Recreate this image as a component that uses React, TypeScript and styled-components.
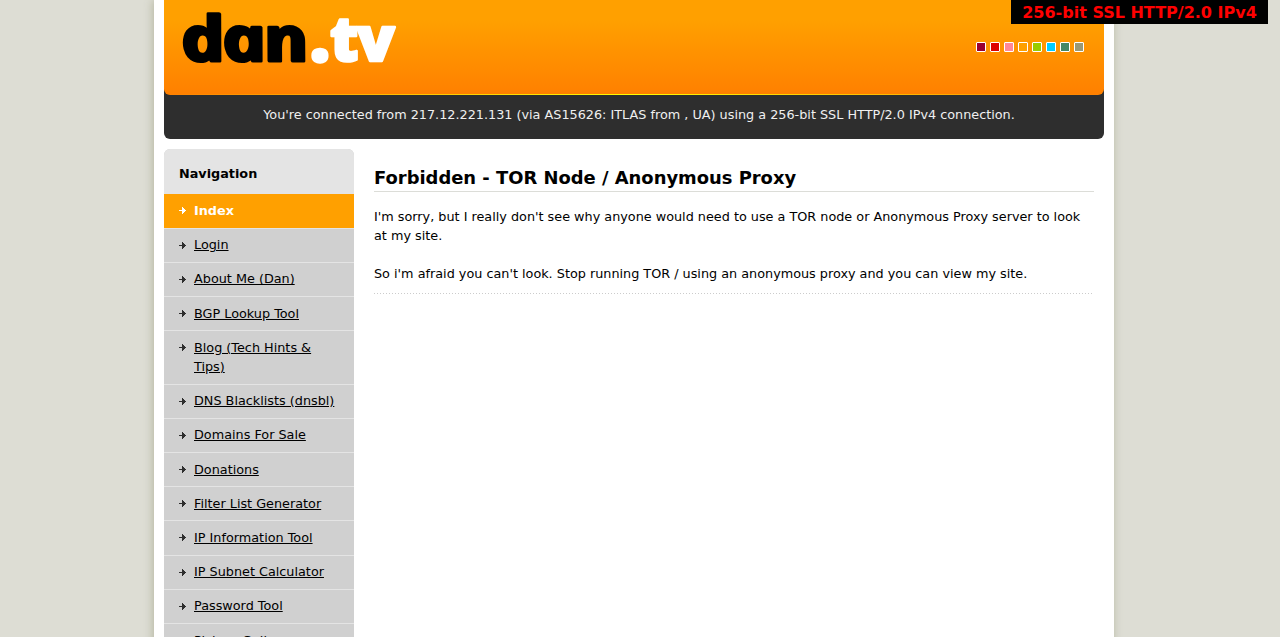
import React from "react";
import styled, { createGlobalStyle } from "styled-components";

const GlobalStyle = createGlobalStyle`
  html { overflow: hidden; height: 100%; }
  body {
    margin: 0;
    height: 100%;
    overflow: hidden;
    background: #ddddd4;
    color: #000;
    font: 12.8px/19.2px "DejaVu Sans", sans-serif;
  }
  #root { height: 100%; }
`;

const Backdrop = styled.div`
  position: relative;
  height: 100%;
  overflow: hidden;
`;

const Page = styled.div`
  width: 940px;
  min-height: 100%;
  margin-left: 154px;
  padding: 0 10px;
  background: #fff;
  box-shadow: -1px 0 9px #b4b59f;
`;

const Header = styled.header`
  background: #2e2e2e;
  border-radius: 0 0 6px 6px;
  height: 139px;
`;

const Banner = styled.div`
  display: flex;
  justify-content: space-between;
  align-items: flex-start;
  box-sizing: border-box;
  height: 95px;
  padding: 0 20px;
  border-radius: 0 0 6px 6px;
  background:
    linear-gradient(90deg, rgba(255, 255, 0, 0), #ffff00 50%, rgba(255, 255, 0, 0)) bottom / 100% 1px no-repeat,
    linear-gradient(#ffa000 0, #ffa000 20px, #ff8000 94px);
`;

const Logo = styled.svg`
  display: block;
  width: 220px;
  height: 95px;
  overflow: visible;
  font: 800 62px "Open Sans", sans-serif;
  stroke-width: 2.5px;
  stroke-linejoin: round;
`;

const Swatches = styled.div`
  display: flex;
  gap: 4px;
  padding-top: 42px;
`;

const Swatch = styled.span<{ $color: string }>`
  width: 8px;
  height: 8px;
  border: 1px solid #fff;
  border-radius: 1px;
  background: ${(p) => p.$color};
`;

const Connection = styled.p`
  margin: 0;
  padding: 10px 0 0 10px;
  color: #f0f0f0;
  text-align: center;
`;

const Columns = styled.div`
  display: flex;
  align-items: flex-start;
  gap: 20px;
  padding-top: 10px;
`;

const Sidebar = styled.nav`
  flex: 0 0 190px;
  background: #d0d0d0;
  border-radius: 6px 6px 0 0;
  overflow: hidden;
`;

const SidebarTitle = styled.h2`
  margin: 0;
  padding: 15px 15px 10.2px;
  background: #e4e4e4;
  font-size: 12.8px;
  line-height: 19.2px;
`;

const NavList = styled.ul`
  margin: 0;
  padding: 0;
  list-style: none;
`;

const NavItem = styled.li<{ $active?: boolean }>`
  display: flex;
  align-items: flex-start;
  gap: 8px;
  padding: 6.5px 15px 7.5px;
  border-top: 1px solid #e4e4e4;
  background: ${(p) => (p.$active ? "#ffa000" : "#d0d0d0")};
  color: ${(p) => (p.$active ? "#fff" : "#2e2e2e")};
`;

const NavLink = styled.a<{ $active?: boolean }>`
  color: ${(p) => (p.$active ? "#fff" : "#000")};
  font-weight: ${(p) => (p.$active ? 700 : 400)};
  text-decoration: ${(p) => (p.$active ? "none" : "underline")};
`;

const Arrow = styled.svg`
  flex: none;
  width: 7px;
  height: 7px;
  margin-top: 6.5px;
`;

const Content = styled.main`
  flex: 0 0 720px;
  padding-top: 15px;
`;

const Title = styled.h1`
  margin: 0 0 15px;
  padding-bottom: 0;
  border-bottom: 1px solid #dcddd8;
  font-size: 17.92px;
  line-height: 27px;
`;

const Message = styled.p`
  margin: 0 0 18.6px;
`;

const Divider = styled.div`
  width: 718px;
  height: 1px;
  margin-top: -9px;
  background: repeating-linear-gradient(90deg, #ccc 0 1px, #fff 1px 3px);
`;

const Badge = styled.div`
  position: absolute;
  top: 0;
  right: 12px;
  width: 257px;
  height: 24px;
  background: #000;
  color: #f00;
  font-size: 16px;
  font-weight: 700;
  line-height: 25px;
  text-align: center;
`;

const colors = ["#990033", "#dd0000", "#ff8899", "#ffa000", "#99cc00", "#00ccff", "#448866", "#999977"];

const links = [
  "Index",
  "Login",
  "About Me (Dan)",
  "BGP Lookup Tool",
  "Blog (Tech Hints & Tips)",
  "DNS Blacklists (dnsbl)",
  "Domains For Sale",
  "Donations",
  "Filter List Generator",
  "IP Information Tool",
  "IP Subnet Calculator",
  "Password Tool",
  "Picture Gallery",
];

const App = () => (
  <Backdrop>
    <GlobalStyle />
    <Page>
      <Header>
        <Banner>
          <Logo viewBox="0 0 220 95">
            {/* The italic cut has the round single-storey a; the skew stands it upright again. */}
            <text
              x="1 35.5 70"
              fill="#000"
              stroke="#000"
              fontStyle="italic"
              fontWeight="700"
              strokeWidth="3"
              transform="translate(0 61) skewX(14.5) scale(1.2 1)"
            >
              dan
            </text>
            <text y="61" x="127 146 173" fill="#fff" stroke="#fff">
              <tspan strokeWidth="4.5">.</tspan>tv
            </text>
          </Logo>
          <Swatches>
            {colors.map((c) => (
              <Swatch key={c} $color={c} />
            ))}
          </Swatches>
        </Banner>
        <Connection>
          You're connected from 217.12.221.131 (via AS15626: ITLAS from , UA) using a 256-bit SSL HTTP/2.0 IPv4
          connection.
        </Connection>
      </Header>
      <Columns>
        <Sidebar>
          <SidebarTitle>Navigation</SidebarTitle>
          <NavList>
            {links.map((label, i) => (
              <NavItem key={label} $active={i === 0}>
                <Arrow viewBox="0 0 7 7" fill="currentColor" shapeRendering="crispEdges">
                  <path d="M0 3H3V0H4V1H5V2H6V3H7V4H6V5H5V6H4V7H3V4H0Z" />
                </Arrow>
                <NavLink $active={i === 0}>{label}</NavLink>
              </NavItem>
            ))}
          </NavList>
        </Sidebar>
        <Content>
          <Title>Forbidden - TOR Node / Anonymous Proxy</Title>
          <Message>
            I'm sorry, but I really don't see why anyone would need to use a TOR node or Anonymous Proxy server to look
            at my site.
          </Message>
          <Message>
            So i'm afraid you can't look. Stop running TOR / using an anonymous proxy and you can view my site.
          </Message>
          <Divider />
        </Content>
      </Columns>
    </Page>
    <Badge>256-bit SSL HTTP/2.0 IPv4</Badge>
  </Backdrop>
);

export default App;
